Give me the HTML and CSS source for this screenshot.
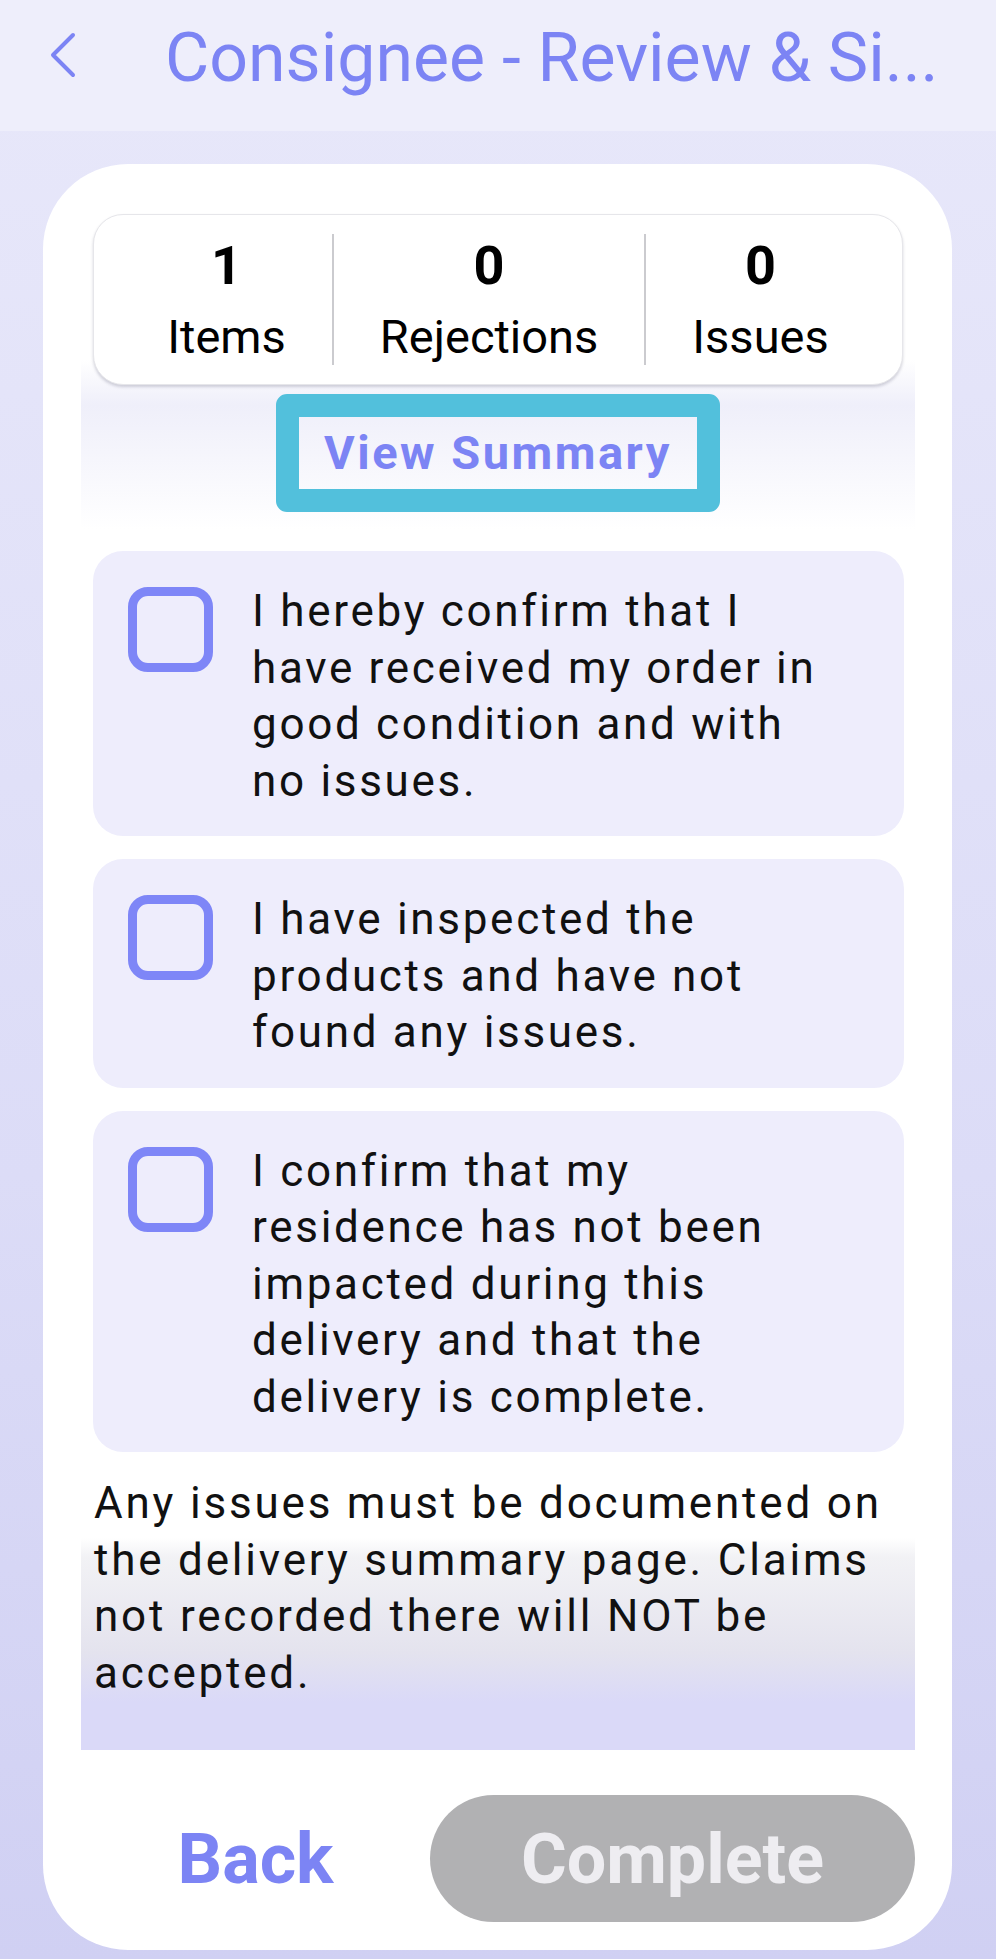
FILE: index.html
```html
<!DOCTYPE html>
<html lang="en">
<head>
    <meta charset="UTF-8">
    <meta name="viewport" content="width=device-width, initial-scale=1.0">
    <title>Consignee - Review &amp; Sign</title>
    <link rel="stylesheet" href="styles.css">
</head>
<body>
    <header class="top-bar">
        <svg class="back-icon" width="28" height="46" viewBox="0 0 28 46">
            <polyline points="24,3 4,23 24,43" fill="none" stroke="#7c84f4" stroke-width="4" stroke-linecap="round" stroke-linejoin="round"/>
        </svg>
        <h1 class="title">Consignee - Review &amp; Si...</h1>
    </header>

    <main class="sheet">
        <!-- Totals + summary link -->
        <section class="summary">
            <div class="stats">
                <div class="stat">
                    <span class="stat-num">1</span>
                    <span class="stat-label">Items</span>
                </div>
                <div class="stat">
                    <span class="stat-num">0</span>
                    <span class="stat-label">Rejections</span>
                </div>
                <div class="stat">
                    <span class="stat-num">0</span>
                    <span class="stat-label">Issues</span>
                </div>
            </div>
            <button class="summary-btn">View Summary</button>
        </section>

        <!-- Confirmations -->
        <div class="checklist">
            <label class="check-card">
                <span class="box"></span>
                <span class="check-text">I hereby confirm that I have received my order in good condition and with no issues.</span>
            </label>
            <label class="check-card">
                <span class="box"></span>
                <span class="check-text">I have inspected the products and have not found any issues.</span>
            </label>
            <label class="check-card">
                <span class="box"></span>
                <span class="check-text">I confirm that my residence has not been impacted during this delivery and that the delivery is complete.</span>
            </label>
        </div>

        <p class="note">Any issues must be documented on the delivery summary page. Claims not recorded there will NOT be accepted.</p>

        <div class="actions">
            <button class="back-btn">Back</button>
            <button class="complete-btn" disabled>Complete</button>
        </div>
    </main>
</body>
</html>
```

FILE: styles.css
```css
* {
    margin: 0;
    padding: 0;
    box-sizing: border-box;
}

body {
    font-family: 'Roboto', 'Liberation Sans', sans-serif;
    color: #111;
    background: linear-gradient(180deg, #e8e8fa 0%, #dcdcf7 60%, #d0d0f3 100%);
    min-height: 1959px;
}

/* Top bar */
.top-bar {
    height: 131px;
    display: flex;
    align-items: flex-start;
    padding: 18px 0 0 49px;
    background-color: #eeeefb;
}

.back-icon {
    margin-top: 14px;
    flex-shrink: 0;
}

.title {
    margin-left: 88px;
    font-size: 68px;
    font-weight: 400;
    line-height: 80px;
    color: #7c84f4;
    white-space: nowrap;
}

/* White sheet */
.sheet {
    margin: 33px 44px 9px 43px;
    height: 1786px;
    padding: 36px 37px 28px 38px;
    background-color: white;
    border-radius: 85px;
    display: flex;
    flex-direction: column;
}

.summary {
    padding: 14px 12px 39px;
    display: flex;
    flex-direction: column;
    align-items: center;
    background: linear-gradient(180deg, #fff 0, #fff 160px, #efeffa 205px, #fff 330px);
}

.stats {
    width: 100%;
    display: flex;
    justify-content: center;
    padding: 19px 0;
    background-color: white;
    border: 1px solid #e6e6ea;
    border-radius: 30px;
    box-shadow: 0 2px 3px rgba(60, 60, 90, 0.22);
}

.stat {
    display: flex;
    flex-direction: column;
    align-items: center;
    padding: 0 46px;
}

.stat + .stat {
    border-left: 2px solid #cbcbcf;
}

.stat-num {
    font-size: 54px;
    font-weight: 700;
    line-height: 64px;
    color: #000;
}

.stat-label {
    margin-top: 11px;
    font-size: 47px;
    line-height: 56px;
    color: #000;
}

.summary-btn {
    margin-top: 9px;
    padding: 0 25px;
    height: 118px;
    border: 23px solid #52c0dc;
    border-radius: 11px;
    background: transparent;
    font-family: inherit;
    font-size: 47px;
    font-weight: 700;
    letter-spacing: 2.5px;
    line-height: 72px;
    color: #7c84f4;
}

/* Checkbox cards */
.checklist {
    display: flex;
    flex-direction: column;
    gap: 23px;
    padding: 0 11px 0 12px;
}

.check-card {
    display: flex;
    align-items: flex-start;
    gap: 39px;
    padding: 32px 63px 27px 35px;
    background-color: #eeedfc;
    border-radius: 30px;
}

.box {
    flex-shrink: 0;
    width: 85px;
    height: 85px;
    margin-top: 4px;
    border: 9px solid #7e86f7;
    border-radius: 20px;
}

.check-text {
    font-size: 44px;
    line-height: 56.5px;
    letter-spacing: 2.7px;
}

/* Bottom note with fade */
.note {
    padding: 23px 13px 49px;
    font-size: 44px;
    line-height: 56.5px;
    letter-spacing: 2.8px;
    background: linear-gradient(180deg, #fff 0, #fff 86px, #f2f2f5 105px, #e4e3ee 200px, #dad9f8 250px, #dad9f8 100%);
}

/* Buttons */
.actions {
    margin-top: 45px;
    display: flex;
    align-items: center;
}

.back-btn {
    flex: 1;
    border: none;
    background: none;
    font-family: inherit;
    font-size: 70px;
    font-weight: 700;
    color: #7c84f4;
}

.complete-btn {
    width: 485px;
    height: 127px;
    border: none;
    border-radius: 64px;
    background-color: #b1b1b3;
    font-family: inherit;
    font-size: 70px;
    font-weight: 700;
    color: #eeedf1;
}
```
